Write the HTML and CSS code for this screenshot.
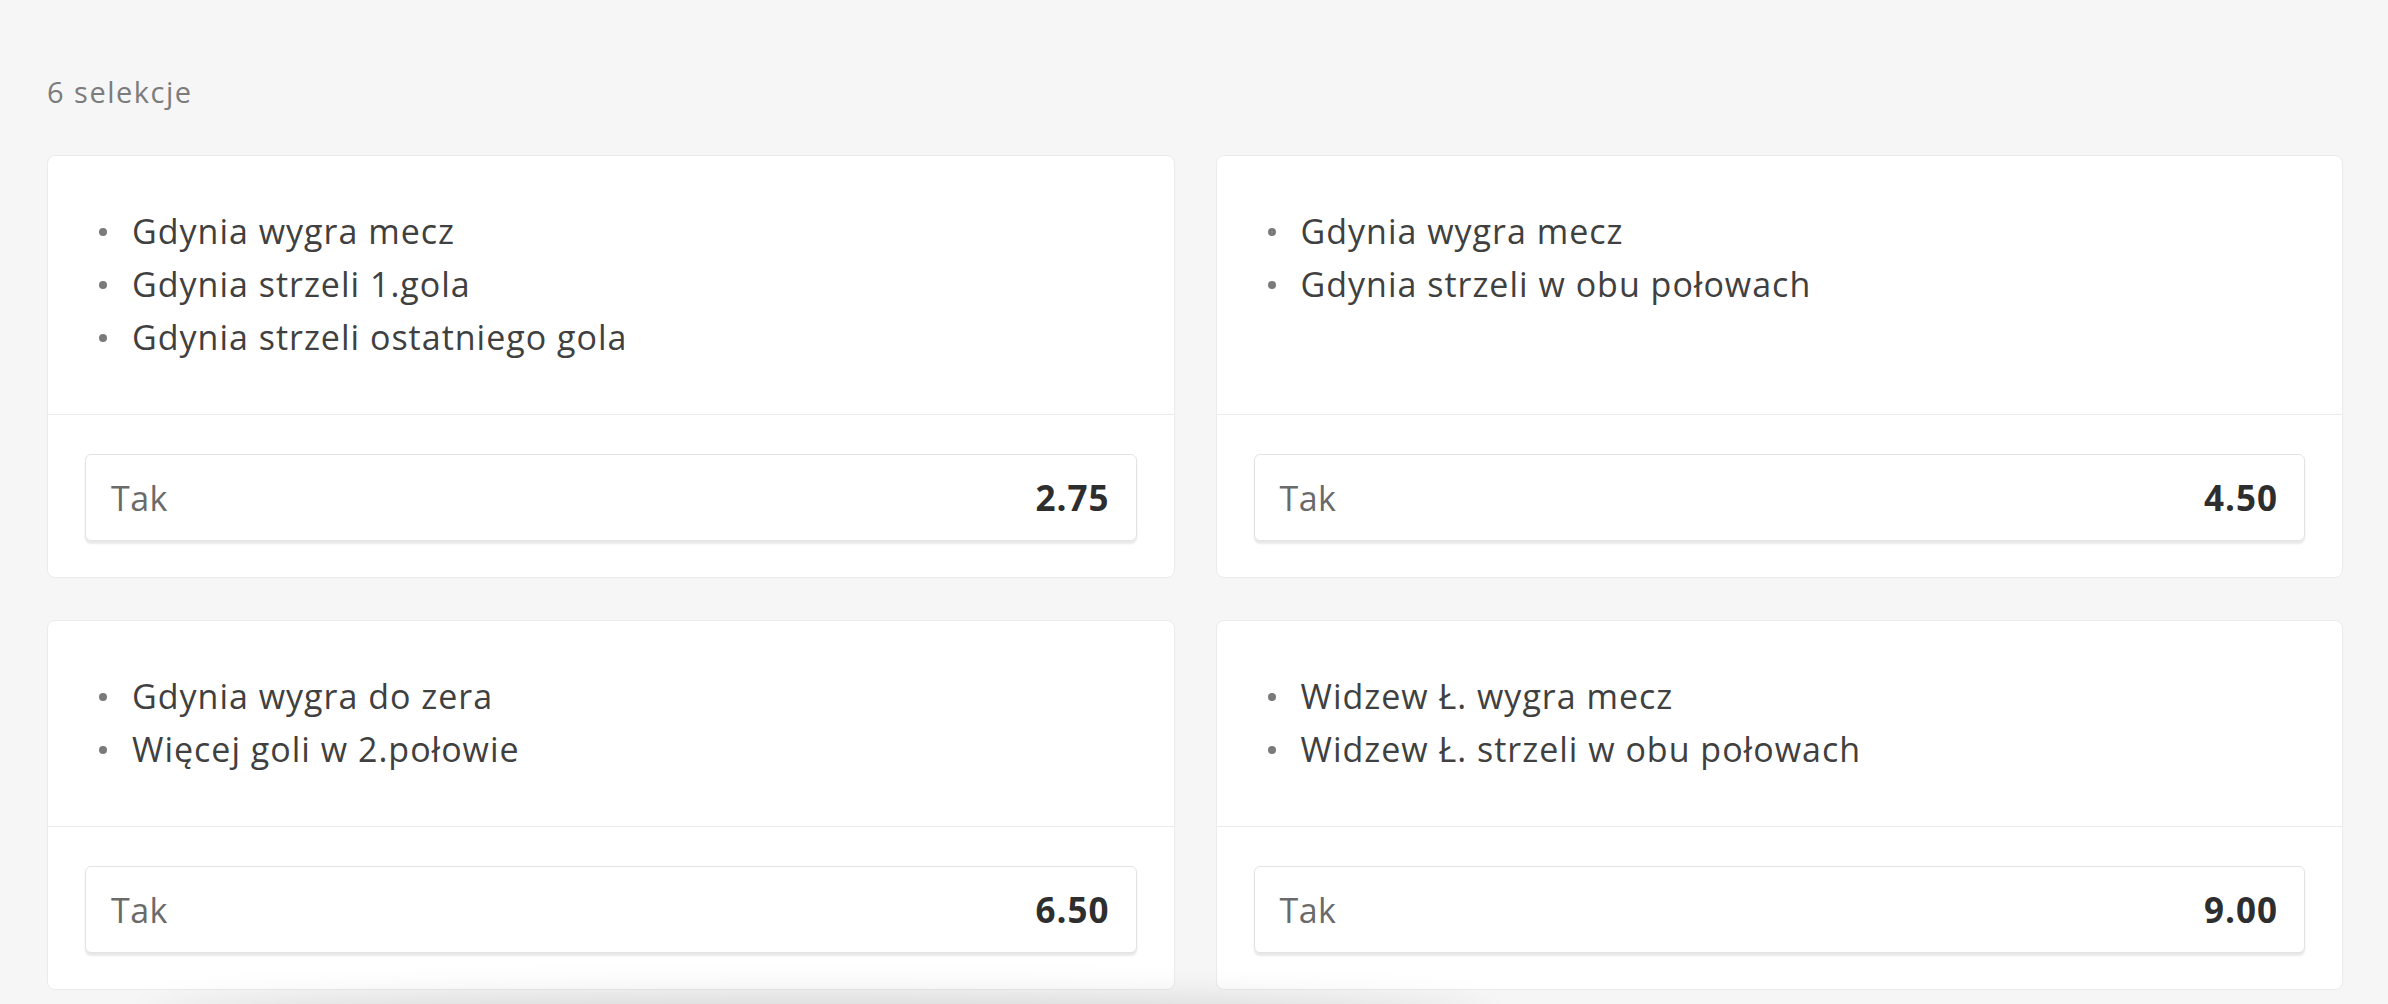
FILE: index.html
```html
<!DOCTYPE html>
<html lang="pl">
<head>
<meta charset="utf-8">
<title>Selekcje</title>
<link rel="stylesheet" href="styles.css">
</head>
<body>
<main class="page">
  <div class="count">6 selekcje</div>
  <div class="grid">
    <section class="card">
      <ul class="sels">
        <li>Gdynia wygra mecz</li>
        <li>Gdynia strzeli 1.gola</li>
        <li>Gdynia strzeli ostatniego gola</li>
      </ul>
      <div class="foot">
        <button class="odd"><span class="lbl">Tak</span><span class="val">2.75</span></button>
      </div>
    </section>
    <section class="card">
      <ul class="sels">
        <li>Gdynia wygra mecz</li>
        <li>Gdynia strzeli w obu połowach</li>
      </ul>
      <div class="foot">
        <button class="odd"><span class="lbl">Tak</span><span class="val">4.50</span></button>
      </div>
    </section>
    <section class="card">
      <ul class="sels">
        <li>Gdynia wygra do zera</li>
        <li>Więcej goli w 2.połowie</li>
      </ul>
      <div class="foot">
        <button class="odd"><span class="lbl">Tak</span><span class="val">6.50</span></button>
      </div>
    </section>
    <section class="card">
      <ul class="sels">
        <li>Widzew Ł. wygra mecz</li>
        <li>Widzew Ł. strzeli w obu połowach</li>
      </ul>
      <div class="foot">
        <button class="odd"><span class="lbl">Tak</span><span class="val">9.00</span></button>
      </div>
    </section>
  </div>
  <div class="dock-shadow"></div>
</main>
</body>
</html>
```
FILE: styles.css
```css
html, body {
  margin: 0;
  padding: 0;
}
body {
  background: #f6f6f6;
  font-family: "Open Sans", "Noto Sans", sans-serif;
  color: #3b3b3b;
  overflow: hidden;
}
.page {
  padding: 72px 45px 0 47px;
}
.count {
  font-size: 29px;
  letter-spacing: 1.5px;
  line-height: 40px;
  color: #7c7c7c;
  margin-bottom: 43px;
}
.grid {
  display: grid;
  grid-template-columns: 1fr 1fr;
  column-gap: 41px;
  row-gap: 42px;
}
.card {
  background: #fff;
  border: 1px solid #ebebeb;
  border-radius: 8px;
  display: flex;
  flex-direction: column;
}
.sels {
  flex: 1;
  list-style: none;
  margin: 0;
  padding: 49px 20px 50px 51px;
}
.sels li {
  display: flex;
  align-items: center;
  font-size: 34px;
  letter-spacing: 1px;
  line-height: 53px;
  color: #404040;
}
.sels li::before {
  content: "";
  width: 8px;
  height: 8px;
  border-radius: 50%;
  background: #7a7a7a;
  margin-right: 25px;
  flex: none;
}
.foot {
  border-top: 1px solid #ebebeb;
  padding: 39px 37px 36px 37px;
}
.odd {
  display: flex;
  justify-content: space-between;
  align-items: center;
  width: 100%;
  height: 87px;
  padding: 0 26px 0 25px;
  background: #fff;
  border: 1px solid #e3e3e3;
  border-radius: 6px;
  box-shadow: 0 3px 2px rgba(0, 0, 0, 0.09);
  font-family: inherit;
  cursor: pointer;
}
.lbl {
  font-size: 34px;
  letter-spacing: 0.5px;
  color: #6a6a6a;
}
.val {
  font-size: 35px;
  letter-spacing: 1px;
  font-weight: 700;
  color: #2e2e2e;
}
.dock-shadow {
  position: fixed;
  left: 150px;
  right: 900px;
  bottom: -40px;
  height: 40px;
  box-shadow: 0 0 40px rgba(0, 0, 0, 0.18);
  border-radius: 50%;
}
```
